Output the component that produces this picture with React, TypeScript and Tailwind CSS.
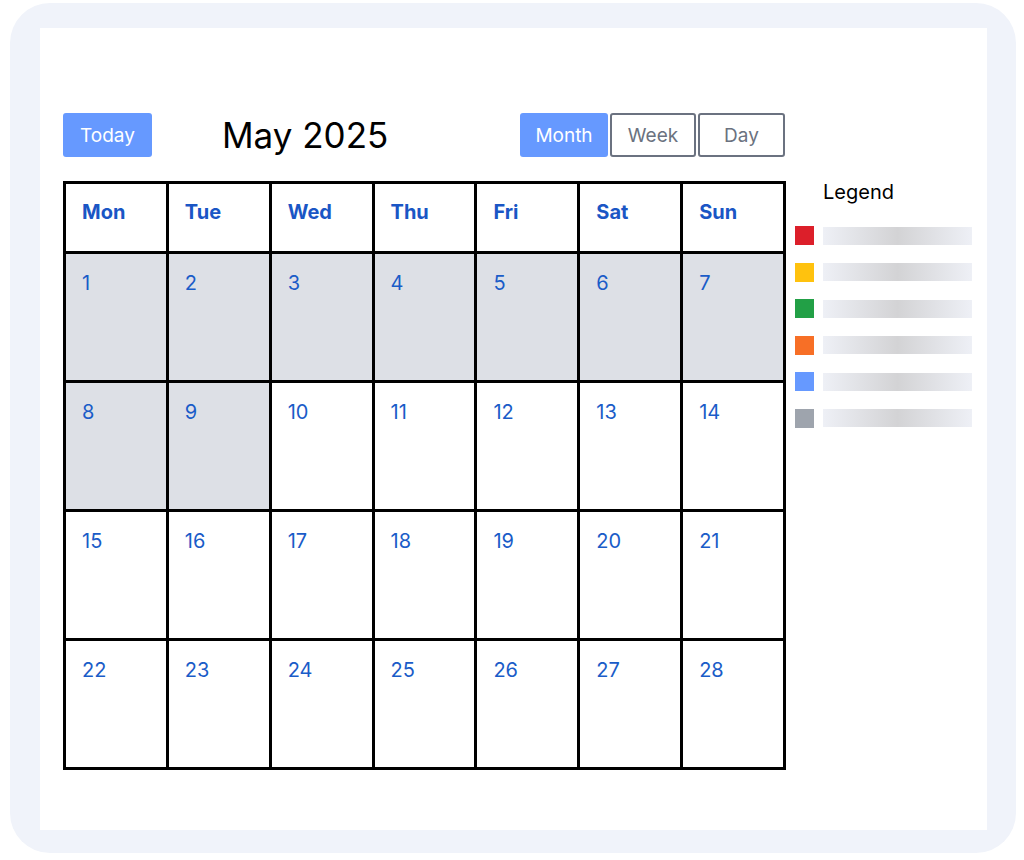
import React from "react";

const WEEKDAYS = ["Mon", "Tue", "Wed", "Thu", "Fri", "Sat", "Sun"];
const PAST_UNTIL = 9;

const LEGEND = ["bg-[#dc1f2a]", "bg-[#ffc20e]", "bg-[#22a046]", "bg-[#f76f26]", "bg-[#6699ff]", "bg-[#9ea4ad]"];

function Calendar() {
  const days = Array.from({ length: 28 }, (_, i) => i + 1);
  return (
    <div className="grid w-[723px] grid-cols-7 gap-[3px] bg-black p-[3px]">
      {WEEKDAYS.map((d) => (
        <div key={d} className="h-[67px] bg-white pl-[16px] pt-[15px] text-[20px] font-bold leading-[26px] text-[#1a56c5]">
          {d}
        </div>
      ))}
      {days.map((n) => (
        <div
          key={n}
          className={`h-[126px] pl-[16px] pt-[16px] text-[20px] leading-[26px] text-[#1a5cc8] ${
            n <= PAST_UNTIL ? "bg-[#dde0e6]" : "bg-white"
          }`}
        >
          {n}
        </div>
      ))}
    </div>
  );
}

function Legend() {
  return (
    <div className="ml-[9px] flex flex-col">
      <div className="ml-[28px] h-[22px] text-[20px] leading-[22px] text-black">Legend</div>
      <div className="mt-[23px] flex flex-col gap-[17.5px]">
        {LEGEND.map((c) => (
          <div key={c} className="flex h-[19px] items-center gap-[9px]">
            <div className={`h-[19px] w-[19px] ${c}`} />
            <div className="h-[18px] w-[149px] bg-gradient-to-r from-[#eef0f6] via-[#d3d3d5] to-[#eef0f6]" />
          </div>
        ))}
      </div>
    </div>
  );
}

export default function App() {
  return (
    <div className="h-[860px] w-[1024px] bg-white pl-[10px] pt-[3px]" style={{ fontFamily: "Inter, 'Noto Sans', sans-serif" }}>
      <div className="h-[850px] w-[1006px] rounded-[40px] bg-[#f0f3fa] pl-[30px] pr-[29px] pt-[25px]">
        <div className="h-[802px] bg-white pl-[23px] pt-[85px]">
          <div className="flex h-[44px] items-center">
            <button type="button" className="h-[44px] w-[89px] rounded-[3px] bg-[#6699ff] pt-[2px] text-[19px] text-white">
              Today
            </button>
            <h1 className="ml-[70px] w-[298px] text-[35px] font-normal text-black">May 2025</h1>
            <div className="flex gap-[2px]">
              <button type="button" className="h-[44px] w-[88px] rounded-[3px] bg-[#6699ff] pt-[2px] text-[19px] text-white">
                Month
              </button>
              <button type="button" className="h-[44px] w-[86px] rounded-[3px] border-2 border-[#6b7280] bg-white pt-[2px] text-[19px] text-[#6b7280]">
                Week
              </button>
              <button type="button" className="h-[44px] w-[87px] rounded-[3px] border-2 border-[#6b7280] bg-white pt-[2px] text-[19px] text-[#6b7280]">
                Day
              </button>
            </div>
          </div>
          <div className="mt-[24px] flex items-start">
            <Calendar />
            <Legend />
          </div>
        </div>
      </div>
    </div>
  );
}
